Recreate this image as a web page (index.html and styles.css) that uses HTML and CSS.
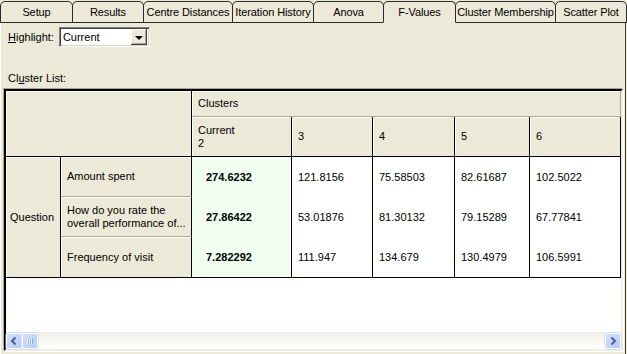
FILE: index.html
```html
<!DOCTYPE html>
<html>
<head>
<meta charset="utf-8">
<link rel="stylesheet" href="styles.css">
</head>
<body>
<div class="tabs">
  <div class="tab t1">Setup</div>
  <div class="tab t2">Results</div>
  <div class="tab t3">Centre Distances</div>
  <div class="tab t4">Iteration History</div>
  <div class="tab t5">Anova</div>
  <div class="tab t6 active">F-Values</div>
  <div class="tab t7">Cluster Membership</div>
  <div class="tab t8">Scatter Plot</div>
</div>
<div class="panel">
  <div class="hl-row">
    <span class="hl-label"><u>H</u>ighlight:</span>
    <div class="select">
      <span class="select-text">Current</span>
      <span class="drop"><span class="tri"></span></span>
    </div>
  </div>
  <div class="list-label">Cl<u>u</u>ster List:</div>
  <div class="frame">
    <div class="grid">
      <div class="hc corner"></div>
      <div class="hc clusters">Clusters</div>
      <div class="hc colh">Current<br>2</div>
      <div class="hc colh">3</div>
      <div class="hc colh">4</div>
      <div class="hc colh">5</div>
      <div class="hc colh">6</div>

      <div class="hc question">Question</div>
      <div class="hc lab r1">Amount spent</div>
      <div class="dc cur r1">274.6232</div>
      <div class="dc r1">121.8156</div>
      <div class="dc r1">75.58503</div>
      <div class="dc r1">82.61687</div>
      <div class="dc r1">102.5022</div>

      <div class="hc lab r2">How do you rate the<br>overall performance of...</div>
      <div class="dc cur r2">27.86422</div>
      <div class="dc r2">53.01876</div>
      <div class="dc r2">81.30132</div>
      <div class="dc r2">79.15289</div>
      <div class="dc r2">67.77841</div>

      <div class="hc lab last r3">Frequency of visit</div>
      <div class="dc cur r3">7.282292</div>
      <div class="dc r3">111.947</div>
      <div class="dc r3">134.679</div>
      <div class="dc r3">130.4979</div>
      <div class="dc r3">106.5991</div>
    </div>
    <div class="blank"></div>
    <div class="hscroll">
      <div class="sbtn">
        <svg width="14" height="14" viewBox="0 0 14 14"><path d="M8.5 3.5 L5 7 L8.5 10.5" fill="none" stroke="#4D6185" stroke-width="2"/></svg>
      </div>
      <div class="sbtn thumb">
        <svg width="14" height="14" viewBox="0 0 14 14">
          <g stroke-width="1">
            <line x1="4.5" y1="4" x2="4.5" y2="10" stroke="#EEF4FE"/>
            <line x1="5.5" y1="4" x2="5.5" y2="10" stroke="#8CB0F8"/>
            <line x1="6.5" y1="4" x2="6.5" y2="10" stroke="#EEF4FE"/>
            <line x1="7.5" y1="4" x2="7.5" y2="10" stroke="#8CB0F8"/>
            <line x1="8.5" y1="4" x2="8.5" y2="10" stroke="#EEF4FE"/>
            <line x1="9.5" y1="4" x2="9.5" y2="10" stroke="#8CB0F8"/>
          </g>
        </svg>
      </div>
      <div class="track"></div>
      <div class="sbtn">
        <svg width="14" height="14" viewBox="0 0 14 14"><path d="M5.5 3.5 L9 7 L5.5 10.5" fill="none" stroke="#4D6185" stroke-width="2"/></svg>
      </div>
    </div>
  </div>
</div>
</body>
</html>
```

FILE: styles.css
```css
html, body { margin: 0; padding: 0; }
body {
  width: 627px;
  height: 354px;
  overflow: hidden;
  background: #ECE9D8;
  font: 11px "Liberation Sans", Arial, sans-serif;
  color: #000;
}
.tabs {
  display: flex;
  padding-top: 1px;
  height: 22px;
}
.tab {
  box-sizing: border-box;
  height: 22px;
  border: 1px solid #2a2a2a;
  border-radius: 5px 5px 0 0;
  margin-right: -1px;
  display: flex;
  align-items: center;
  justify-content: center;
  white-space: nowrap;
  background: #ECE9D8;
  letter-spacing: -0.1px;
}
.tab.active {
  border-bottom-color: #ECE9D8;
  position: relative;
  z-index: 1;
}
.t1 { width: 73px; }
.t2 { width: 72px; }
.t3 { width: 90px; }
.t4 { width: 82px; }
.t5 { width: 71px; }
.t6 { width: 73px; }
.t7 { width: 101px; }
.t8 { width: 72px; }

.panel {
  box-sizing: border-box;
  width: 626px;
  height: 331px;
  border-left: 1px solid #fff;
  border-right: 1px solid #404040;
  padding-top: 4px;
}
.hl-row {
  display: flex;
  align-items: center;
  height: 20px;
  padding-left: 7px;
}
.hl-label { margin-right: 5px; }
.select {
  box-sizing: border-box;
  width: 91px;
  height: 20px;
  background: #fff;
  border: 1px solid;
  border-color: #808080 #fff #fff #808080;
  box-shadow: inset 1px 1px #404040, inset -1px -1px #D4D0C8;
  display: flex;
  align-items: center;
  padding: 2px;
}
.select-text { flex: 1; padding-left: 1px; }
.drop {
  box-sizing: border-box;
  width: 16px;
  height: 16px;
  background: #ECE9D8;
  box-shadow: inset -1px -1px #404040, inset 1px 1px #fff, inset -2px -2px #ACA899;
  display: flex;
  align-items: center;
  justify-content: center;
}
.tri {
  width: 0;
  height: 0;
  border-left: 4px solid transparent;
  border-right: 4px solid transparent;
  border-top: 4px solid #000;
  margin-top: 1px;
}
.list-label {
  margin-top: 25px;
  height: 13px;
  line-height: 13px;
  padding-left: 7px;
}
.frame {
  box-sizing: border-box;
  width: 619px;
  height: 262px;
  margin: 4px 0 0 3px;
  border: 2px solid;
  border-color: #000 #F1EFE2 #F1EFE2 #000;
  box-shadow: -1px -1px 0 #ACA899, 1px 1px 0 #fff;
  background: #fff;
  display: flex;
  flex-direction: column;
}
.grid {
  display: grid;
  grid-template-columns: 55px 131px 100px 81px 82px 75px 91px;
  grid-template-rows: 26px 40px 40px 40px 40px;
  border-bottom: 1px solid #000;
}
.hc, .dc {
  box-sizing: border-box;
  display: flex;
  align-items: center;
  white-space: nowrap;
  line-height: 13px;
}
.hc {
  background: #ECE9D8;
  box-shadow: inset 1px 1px #fff;
  padding-left: 6px;
}
.corner {
  grid-column: 1 / 3;
  grid-row: 1 / 3;
  border-right: 1px solid #000;
  border-bottom: 1px solid #000;
}
.clusters {
  grid-column: 3 / 8;
  grid-row: 1;
  border-bottom: 1px solid #ACA899;
  border-right: 1px solid #ACA899;
}
.colh {
  grid-row: 2;
  border-right: 1px solid #000;
  border-bottom: 1px solid #000;
}
.question {
  grid-column: 1;
  grid-row: 3 / 6;
  border-right: 1px solid #000;
  padding-left: 4px;
}
.lab {
  grid-column: 2;
  border-right: 1px solid #000;
  border-bottom: 1px solid #ACA899;
}
.lab.last { border-bottom: none; }
.r1 { grid-row: 3; }
.r2 { grid-row: 4; }
.r3 { grid-row: 5; }
.dc {
  background: #fff;
  border-right: 1px solid #000;
  padding-left: 6px;
}
.dc.cur {
  background: #F0FFF0;
  font-weight: bold;
  padding-left: 14px;
}
.blank { flex: 1; background: #fff; }
.hscroll {
  height: 17px;
  display: flex;
  align-items: stretch;
  background: linear-gradient(#EEEDE5, #F8F7F2 40%, #FEFEFB);
  padding: 1px 0 0 0;
  box-sizing: border-box;
}
.sbtn {
  box-sizing: border-box;
  width: 16px;
  height: 16px;
  border: 1px solid #fff;
  border-radius: 2px;
  background: linear-gradient(135deg, #D2DFFD, #B6CBF9);
  box-shadow: 0 0 0 0.5px #B7C9F2;
  display: flex;
  align-items: center;
  justify-content: center;
}
.track { flex: 1; }
```
